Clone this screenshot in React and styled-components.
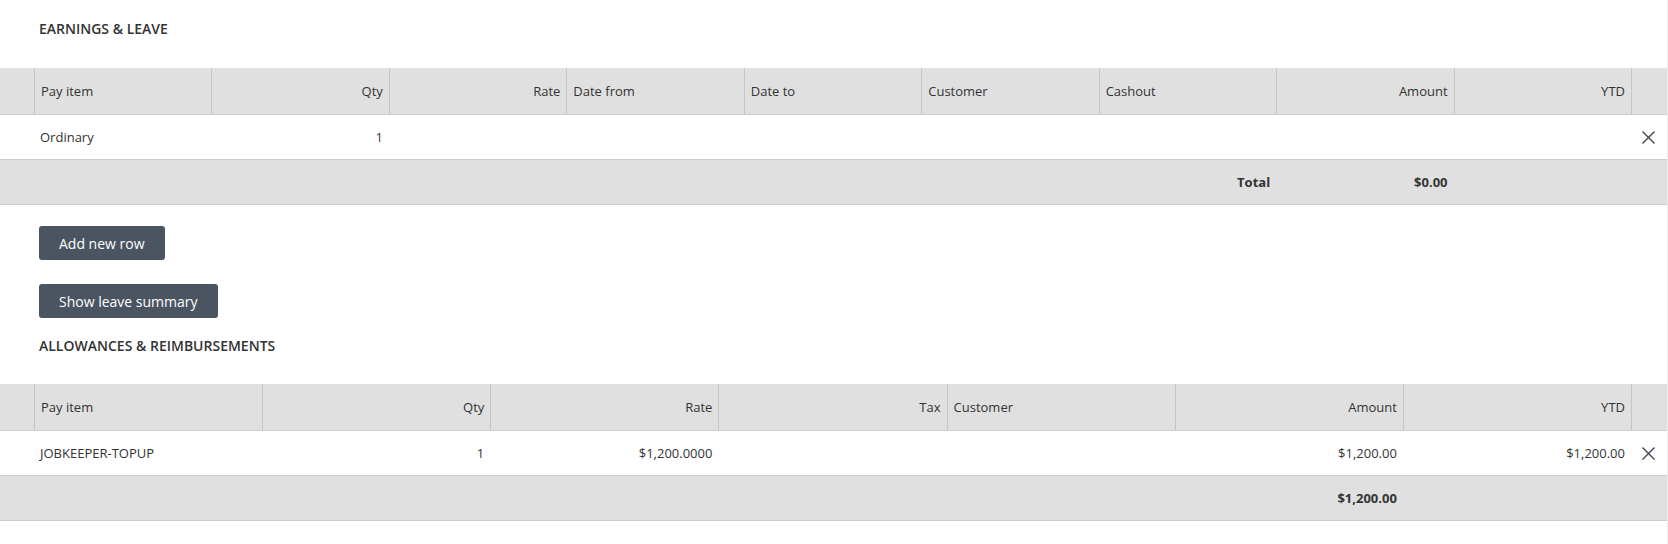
import React from "react";
import styled, { createGlobalStyle } from "styled-components";

const GlobalStyle = createGlobalStyle`
    body {
        margin: 0;
        background: #ffffff;
        font-family: "Open Sans", "Liberation Sans", Arial, sans-serif;
        color: #333333;
    }
`;

const Page = styled.div`
    width: 1667px;
    min-height: 544px;
    border-right: 1px solid #ececec;
    background: #ffffff;
`;

const SectionTitle = styled.h2`
    margin: 0;
    padding: ${props => (props.tight ? "19px 0 29px" : "20px 0 30px")} 39px;
    font-size: 14px;
    line-height: 18px;
    font-weight: 600;
    color: #333333;
    text-transform: uppercase;
`;

const Row = styled.div`
    display: grid;
    grid-template-columns: 34px repeat(${props => props.cols}, 1fr) 36px;
    height: ${props => props.h}px;
    background: ${props => (props.shaded ? "#e0e0e0" : "#ffffff")};
    border-bottom: 1px solid #cdcdcd;
`;

const HeadCell = styled.div`
    display: flex;
    align-items: center;
    justify-content: ${props => (props.right ? "flex-end" : "flex-start")};
    padding: 0 6px;
    font-size: 13px;
    color: #333333;
    border-left: ${props => (props.first ? "none" : "1px solid #c6c6c6")};
`;

const Cell = styled.div`
    display: flex;
    align-items: center;
    justify-content: ${props => (props.right ? "flex-end" : "flex-start")};
    padding: 0 6px;
    font-size: 13px;
    font-weight: ${props => (props.bold ? 700 : 400)};
    color: #333333;
    white-space: nowrap;
`;

const IconCell = styled.div`
    display: flex;
    align-items: center;
    justify-content: center;
    cursor: pointer;
`;

const ButtonStack = styled.div`
    display: flex;
    flex-direction: column;
    align-items: flex-start;
    gap: 24px;
    padding: 21px 0 0 39px;
`;

const Button = styled.button`
    height: 34px;
    padding: 0 20px;
    border: none;
    border-radius: 3px;
    background: #4a5561;
    color: #ffffff;
    font-family: "Open Sans", "Liberation Sans", Arial, sans-serif;
    font-size: 14px;
    cursor: pointer;
`;

const RemoveIcon = () => (
    <svg width="13" height="13" viewBox="0 0 13 13">
        <path d="M0.5 0.5 L12.5 12.5 M12.5 0.5 L0.5 12.5" stroke="#3d4651" strokeWidth="1.4" fill="none" />
    </svg>
);

const earningsCols = [
    { label: "Pay item" },
    { label: "Qty", right: true },
    { label: "Rate", right: true },
    { label: "Date from" },
    { label: "Date to" },
    { label: "Customer" },
    { label: "Cashout" },
    { label: "Amount", right: true },
    { label: "YTD", right: true },
];

const allowanceCols = [
    { label: "Pay item" },
    { label: "Qty", right: true },
    { label: "Rate", right: true },
    { label: "Tax", right: true },
    { label: "Customer" },
    { label: "Amount", right: true },
    { label: "YTD", right: true },
];

function DataTable({ columns, rows, totals }) {
    const n = columns.length;
    return (
        <div>
            <Row cols={n} h={46} shaded>
                <HeadCell first />
                {columns.map(c => (
                    <HeadCell key={c.label} right={c.right}>{c.label}</HeadCell>
                ))}
                <HeadCell />
            </Row>
            {rows.map((r, i) => (
                <Row cols={n} h={44} key={i}>
                    <Cell />
                    {columns.map((c, j) => (
                        <Cell key={c.label} right={c.right}>{r[j] || ""}</Cell>
                    ))}
                    <IconCell><RemoveIcon /></IconCell>
                </Row>
            ))}
            <Row cols={n} h={44} shaded>
                <Cell />
                {columns.map((c, j) => (
                    <Cell key={c.label} right bold>{totals[j] || ""}</Cell>
                ))}
                <Cell />
            </Row>
        </div>
    );
}

function App() {
    return (
        <>
            <GlobalStyle />
            <Page>
                <SectionTitle>Earnings &amp; Leave</SectionTitle>
                <DataTable
                    columns={earningsCols}
                    rows={[["Ordinary", "1"]]}
                    totals={["", "", "", "", "", "", "Total", "$0.00", ""]}
                />
                <ButtonStack>
                    <Button>Add new row</Button>
                    <Button>Show leave summary</Button>
                </ButtonStack>
                <SectionTitle tight>Allowances &amp; Reimbursements</SectionTitle>
                <DataTable
                    columns={allowanceCols}
                    rows={[["JOBKEEPER-TOPUP", "1", "$1,200.0000", "", "", "$1,200.00", "$1,200.00"]]}
                    totals={["", "", "", "", "", "$1,200.00", ""]}
                />
            </Page>
        </>
    );
}

export default App;
